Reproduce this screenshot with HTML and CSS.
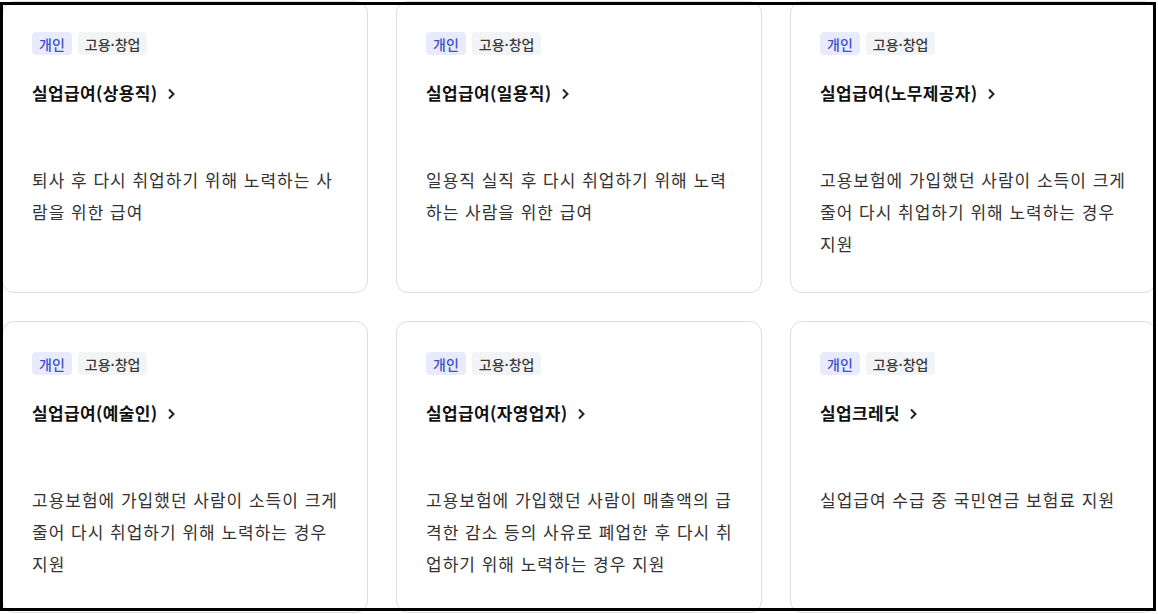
FILE: index.html
```html
<!DOCTYPE html>
<html lang="ko">
<head>
<meta charset="utf-8">
<title>실업급여</title>
<link rel="stylesheet" href="styles.css">
</head>
<body>
<div class="grid">
  <div class="card">
    <div class="tags"><span class="tag tag-blue">개인</span><span class="tag tag-gray">고용·창업</span></div>
    <div class="title">실업급여(상용직) <svg class="chev" viewBox="0 0 8 12" width="8" height="12"><path d="M2 1.5 L6.5 6 L2 10.5" fill="none" stroke="#222" stroke-width="2"/></svg></div>
    <p class="desc">퇴사 후 다시 취업하기 위해 노력하는 사람을 위한 급여</p>
  </div>
  <div class="card">
    <div class="tags"><span class="tag tag-blue">개인</span><span class="tag tag-gray">고용·창업</span></div>
    <div class="title">실업급여(일용직) <svg class="chev" viewBox="0 0 8 12" width="8" height="12"><path d="M2 1.5 L6.5 6 L2 10.5" fill="none" stroke="#222" stroke-width="2"/></svg></div>
    <p class="desc">일용직 실직 후 다시 취업하기 위해 노력하는 사람을 위한 급여</p>
  </div>
  <div class="card">
    <div class="tags"><span class="tag tag-blue">개인</span><span class="tag tag-gray">고용·창업</span></div>
    <div class="title">실업급여(노무제공자) <svg class="chev" viewBox="0 0 8 12" width="8" height="12"><path d="M2 1.5 L6.5 6 L2 10.5" fill="none" stroke="#222" stroke-width="2"/></svg></div>
    <p class="desc">고용보험에 가입했던 사람이 소득이 크게 줄어 다시 취업하기 위해 노력하는 경우 지원</p>
  </div>
  <div class="card">
    <div class="tags"><span class="tag tag-blue">개인</span><span class="tag tag-gray">고용·창업</span></div>
    <div class="title">실업급여(예술인) <svg class="chev" viewBox="0 0 8 12" width="8" height="12"><path d="M2 1.5 L6.5 6 L2 10.5" fill="none" stroke="#222" stroke-width="2"/></svg></div>
    <p class="desc">고용보험에 가입했던 사람이 소득이 크게 줄어 다시 취업하기 위해 노력하는 경우 지원</p>
  </div>
  <div class="card">
    <div class="tags"><span class="tag tag-blue">개인</span><span class="tag tag-gray">고용·창업</span></div>
    <div class="title">실업급여(자영업자) <svg class="chev" viewBox="0 0 8 12" width="8" height="12"><path d="M2 1.5 L6.5 6 L2 10.5" fill="none" stroke="#222" stroke-width="2"/></svg></div>
    <p class="desc">고용보험에 가입했던 사람이 매출액의 급격한 감소 등의 사유로 폐업한 후 다시 취업하기 위해 노력하는 경우 지원</p>
  </div>
  <div class="card">
    <div class="tags"><span class="tag tag-blue">개인</span><span class="tag tag-gray">고용·창업</span></div>
    <div class="title">실업크레딧 <svg class="chev" viewBox="0 0 8 12" width="8" height="12"><path d="M2 1.5 L6.5 6 L2 10.5" fill="none" stroke="#222" stroke-width="2"/></svg></div>
    <p class="desc">실업급여 수급 중 국민연금 보험료 지원</p>
  </div>
</div>
<div class="frame"></div>
</body>
</html>
```
FILE: styles.css
```css
html, body {
  margin: 0;
  padding: 0;
  background: #fff;
  overflow: hidden;
  height: 614px;
}
body {
  font-family: "Noto Sans CJK KR", "Noto Sans", sans-serif;
  color: #222;
}
.grid {
  display: grid;
  grid-template-columns: repeat(3, 366px);
  grid-auto-rows: 292px;
  column-gap: 28px;
  row-gap: 28px;
  padding: 1px 0 0 2px;
}
.card {
  box-sizing: border-box;
  border: 1px solid #dedede;
  border-radius: 12px;
  padding: 30px 28px 0 29px;
  background: #fff;
}
.tags {
  display: flex;
  gap: 6px;
  height: 23px;
}
.tag {
  display: inline-flex;
  align-items: center;
  height: 23px;
  padding: 0 7px;
  border-radius: 4px;
  font-size: 14px;
  font-weight: 500;
  line-height: 1;
}
.tag-blue {
  background: #e8ebfc;
  color: #3f4fcf;
}
.tag-gray {
  background: #f3f4f6;
  color: #3a3a3a;
}
.title {
  margin-top: 25px;
  height: 26px;
  line-height: 26px;
  font-size: 17px;
  font-weight: 700;
  letter-spacing: 0.35px;
  color: #111;
  display: flex;
  align-items: center;
  gap: 4px;
  white-space: pre;
}
.chev {
  display: block;
  margin-top: 1px;
}
.desc {
  margin: 58px 0 0;
  font-size: 17px;
  letter-spacing: 1px;
  line-height: 32px;
  color: #333;
}
.frame {
  position: fixed;
  left: 0;
  top: 2px;
  width: 1156px;
  height: 609px;
  box-sizing: border-box;
  border: 3px solid #000;
  pointer-events: none;
}
```
